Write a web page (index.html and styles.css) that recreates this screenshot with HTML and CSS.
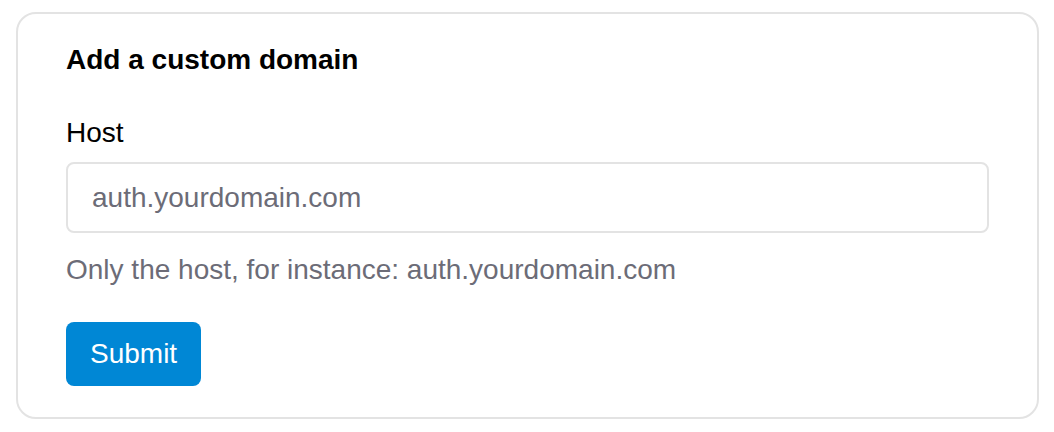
FILE: index.html
```html
<!DOCTYPE html>
<html lang="en">
<head>
<meta charset="utf-8">
<title>Add a custom domain</title>
<link rel="stylesheet" href="styles.css">
</head>
<body>
<div class="card">
  <h2 class="title">Add a custom domain</h2>
  <form class="form">
    <label class="label" for="host">Host</label>
    <input class="input" id="host" type="text" placeholder="auth.yourdomain.com">
    <p class="help">Only the host, for instance: auth.yourdomain.com</p>
    <button class="btn" type="button">Submit</button>
  </form>
</div>
</body>
</html>
```
FILE: styles.css
```css
html, body {
  margin: 0;
  background: #fff;
}
body {
  padding: 12px 15px 0 16px;
  font-family: "Liberation Sans", Arial, Helvetica, sans-serif;
  color: #000;
}
.card {
  border: 2px solid #e3e3e3;
  border-radius: 20px;
  padding: 28px 48px 30px;
  height: 407px;
  box-sizing: border-box;
}
.title {
  margin: 0 0 37px;
  font-size: 28px;
  font-weight: bold;
  line-height: 36px;
}
.form {
  display: flex;
  flex-direction: column;
  align-items: flex-start;
}
.label {
  font-size: 28px;
  line-height: 36px;
  margin-bottom: 11px;
}
.input {
  width: 100%;
  height: 71px;
  box-sizing: border-box;
  border: 2px solid #e3e3e3;
  border-radius: 8px;
  padding: 0 24px;
  font-family: inherit;
  font-size: 28px;
  color: #000;
  outline: none;
}
.input::placeholder {
  color: #6c6c77;
}
.help {
  margin: 19px 0 34px;
  font-size: 28px;
  line-height: 36px;
  color: #6c6c77;
}
.btn {
  height: 64px;
  padding: 0 24px;
  border: none;
  border-radius: 8px;
  background: #0087d5;
  color: #fff;
  font-family: inherit;
  font-size: 28px;
}
```
